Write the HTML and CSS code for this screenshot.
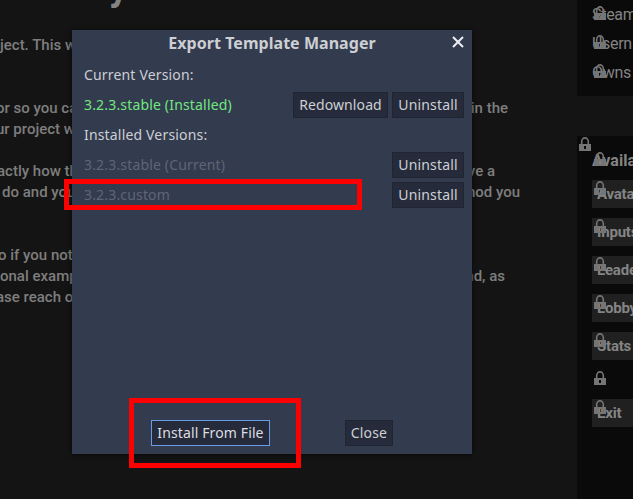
FILE: index.html
```html
<!DOCTYPE html>
<html lang="en">
<head>
<meta charset="utf-8">
<title>Export Template Manager</title>
<link rel="stylesheet" href="styles.css">
</head>
<body>
<svg width="0" height="0" class="defs">
  <symbol id="lock" viewBox="0 0 12 14">
    <path d="M2.7 7V4.5a3.3 3.6 0 0 1 6.6 0V7" fill="none" stroke="currentColor" stroke-width="1.6"/>
    <path fill="currentColor" fill-rule="evenodd" d="M0 7h12v7H0zM5 9v3h2V9z"/>
  </symbol>
</svg>
<div class="scene">
  <main class="article">
    <div class="heading">y</div>
    <div class="line l1"><span>ject. This w</span></div>
    <div class="line"></div>
    <div class="line"></div>
    <div class="line l2"><span>or so you ca</span><span class="end">in the</span></div>
    <div class="line l3"><span>ur project w</span></div>
    <div class="line"></div>
    <div class="line l4"><span>actly how th</span><span class="end">ve a</span></div>
    <div class="line l5"><span>do and you</span><span class="end">hod you</span></div>
    <div class="line"></div>
    <div class="line"></div>
    <div class="line l6"><span>o if you not</span></div>
    <div class="line l7"><span>onal examp</span><span class="end">nd, as</span></div>
    <div class="line l8"><span>ase reach o</span></div>
  </main>
  <aside class="sidebar">
    <section class="panel info">
      <div class="entry">Steam<svg class="lock"><use href="#lock"/></svg></div>
      <div class="entry">Usern<svg class="lock"><use href="#lock"/></svg></div>
      <div class="entry">Owns<svg class="lock"><use href="#lock"/></svg></div>
    </section>
    <section class="panel menu">
      <svg class="lock panel-lock"><use href="#lock"/></svg>
      <div class="title">Availa<svg class="lock"><use href="#lock"/></svg></div>
      <div class="item">Avata<svg class="lock"><use href="#lock"/></svg></div>
      <div class="item">Inputs<svg class="lock"><use href="#lock"/></svg></div>
      <div class="item">Leade<svg class="lock"><use href="#lock"/></svg></div>
      <div class="item">Lobby<svg class="lock"><use href="#lock"/></svg></div>
      <div class="item">Stats<svg class="lock"><use href="#lock"/></svg></div>
      <div class="spacer"><svg class="lock"><use href="#lock"/></svg></div>
      <div class="item">Exit<svg class="lock"><use href="#lock"/></svg></div>
    </section>
  </aside>
</div>

<div class="dialog">
  <header class="dialog-title">Export Template Manager
    <svg class="close" viewBox="0 0 12 12"><path d="M1 1l10 10M11 1L1 11" stroke="#eceef1" stroke-width="2"/></svg>
  </header>
  <div class="rows">
    <div class="row">Current Version:</div>
    <div class="row installed"><span class="name">3.2.3.stable (Installed)</span><button class="redownload">Redownload</button><button class="uninstall">Uninstall</button></div>
    <div class="row">Installed Versions:</div>
    <div class="row muted"><span class="name">3.2.3.stable (Current)</span><button class="uninstall">Uninstall</button></div>
    <div class="row muted"><span class="name">3.2.3.custom</span><button class="uninstall">Uninstall</button></div>
  </div>
  <footer class="actions">
    <button class="install">Install From File</button>
    <button class="dismiss">Close</button>
  </footer>
</div>
<div class="mark mark-version"></div>
<div class="mark mark-install"></div>
</body>
</html>
```
FILE: styles.css
```css
* { box-sizing: border-box; }
body {
  margin: 0;
  width: 633px;
  height: 499px;
  overflow: hidden;
  position: relative;
  background: #141414;
  font-family: "Noto Sans", sans-serif;
  font-size: 14px;
}
.defs { position: absolute; }
.scene {
  display: flex;
  height: 499px;
  font-family: Roboto, sans-serif;
  color: #848484;
}
.article {
  width: 577px;
  overflow: hidden;
  font-size: 15px;
  font-weight: 500;
}
.heading {
  height: 34px;
  padding-left: 109px;
  font-size: 38px;
  line-height: 34px;
  font-weight: 700;
  margin-top: -30px;
  margin-bottom: 31px;
}
.line {
  display: flex;
  justify-content: space-between;
  height: 21px;
  line-height: 21px;
  white-space: nowrap;
  color: #7e7e7e;
}
.l1 { margin-left: 0; }
.l2 { margin-left: -4px; width: 512px; }
.l3 { margin-left: -4px; }
.l4 { margin-left: -3px; width: 498px; }
.l5 { margin-left: 2px; width: 518px; }
.l6 { margin-left: -2px; }
.l7 { margin-left: 0; width: 505px; }
.l8 { margin-left: -4px; }
.sidebar {
  width: 56px;
  overflow: hidden;
  white-space: nowrap;
}
.panel {
  background: #0a0a0a;
  padding-left: 15px;
}
.info { height: 96px; margin-bottom: 40px; font-size: 16px; letter-spacing: -0.3px; }
.entry { position: relative; height: 29px; line-height: 29px; }
.menu { height: 363px; position: relative; font-size: 15px; font-weight: 700; }
.lock {
  position: absolute;
  left: 2px;
  top: 1px;
  width: 12px;
  height: 14px;
  color: #757575;
}
.entry .lock { top: 6px; }
.panel .panel-lock { left: 2px; top: 1px; }
.title { position: relative; height: 44px; padding-top: 12px; line-height: 26px; font-size: 16px; }
.title .lock { top: 16px; }
.item {
  position: relative;
  height: 28px;
  margin-bottom: 10px;
  padding-left: 5px;
  line-height: 28px;
  letter-spacing: -0.2px;
  background: #202020;
}
.spacer { position: relative; height: 19px; margin-bottom: 10px; }
.dialog {
  position: absolute;
  left: 72px;
  top: 30px;
  width: 400px;
  height: 424px;
  display: flex;
  flex-direction: column;
  padding: 0 8px 8px 12px;
  background: #333b4f;
  color: #cdcfd3;
  box-shadow: 0 1px 5px rgba(0, 0, 0, 0.6);
  letter-spacing: 0.17px;
}
.dialog-title {
  height: 30px;
  line-height: 26px;
  font-size: 16px;
  font-weight: 700;
  letter-spacing: 0.04px;
  text-align: center;
  position: relative;
  margin-left: -4px;
}
.close { position: absolute; right: 0; top: 6px; width: 12px; height: 12px; }
.rows { flex: 1; }
.row {
  display: flex;
  align-items: center;
  gap: 4px;
  height: 30px;
  line-height: 20px;
}
.name { flex: 1; }
.installed .name { color: #72e780; }
.muted .name { color: #5f6575; }
button {
  height: 26px;
  padding: 0;
  border: 1px solid #202531;
  background: #262b3b;
  color: #cdcfd3;
  font: inherit;
  letter-spacing: inherit;
  line-height: 20px;
  white-space: nowrap;
}
.redownload { width: 95px; letter-spacing: 0.1px; }
.uninstall { width: 72px; }
.actions {
  display: flex;
  gap: 75px;
  padding-left: 67px;
}
.install { width: 119px; border-color: #699ce8; color: #dcdee2; letter-spacing: 0.12px; }
.dismiss { width: 48px; }
.mark { position: absolute; border: 5px solid #f00; }
.mark-version { left: 64px; top: 179px; width: 298px; height: 31px; }
.mark-install { left: 129px; top: 398px; width: 172px; height: 70px; }
```
